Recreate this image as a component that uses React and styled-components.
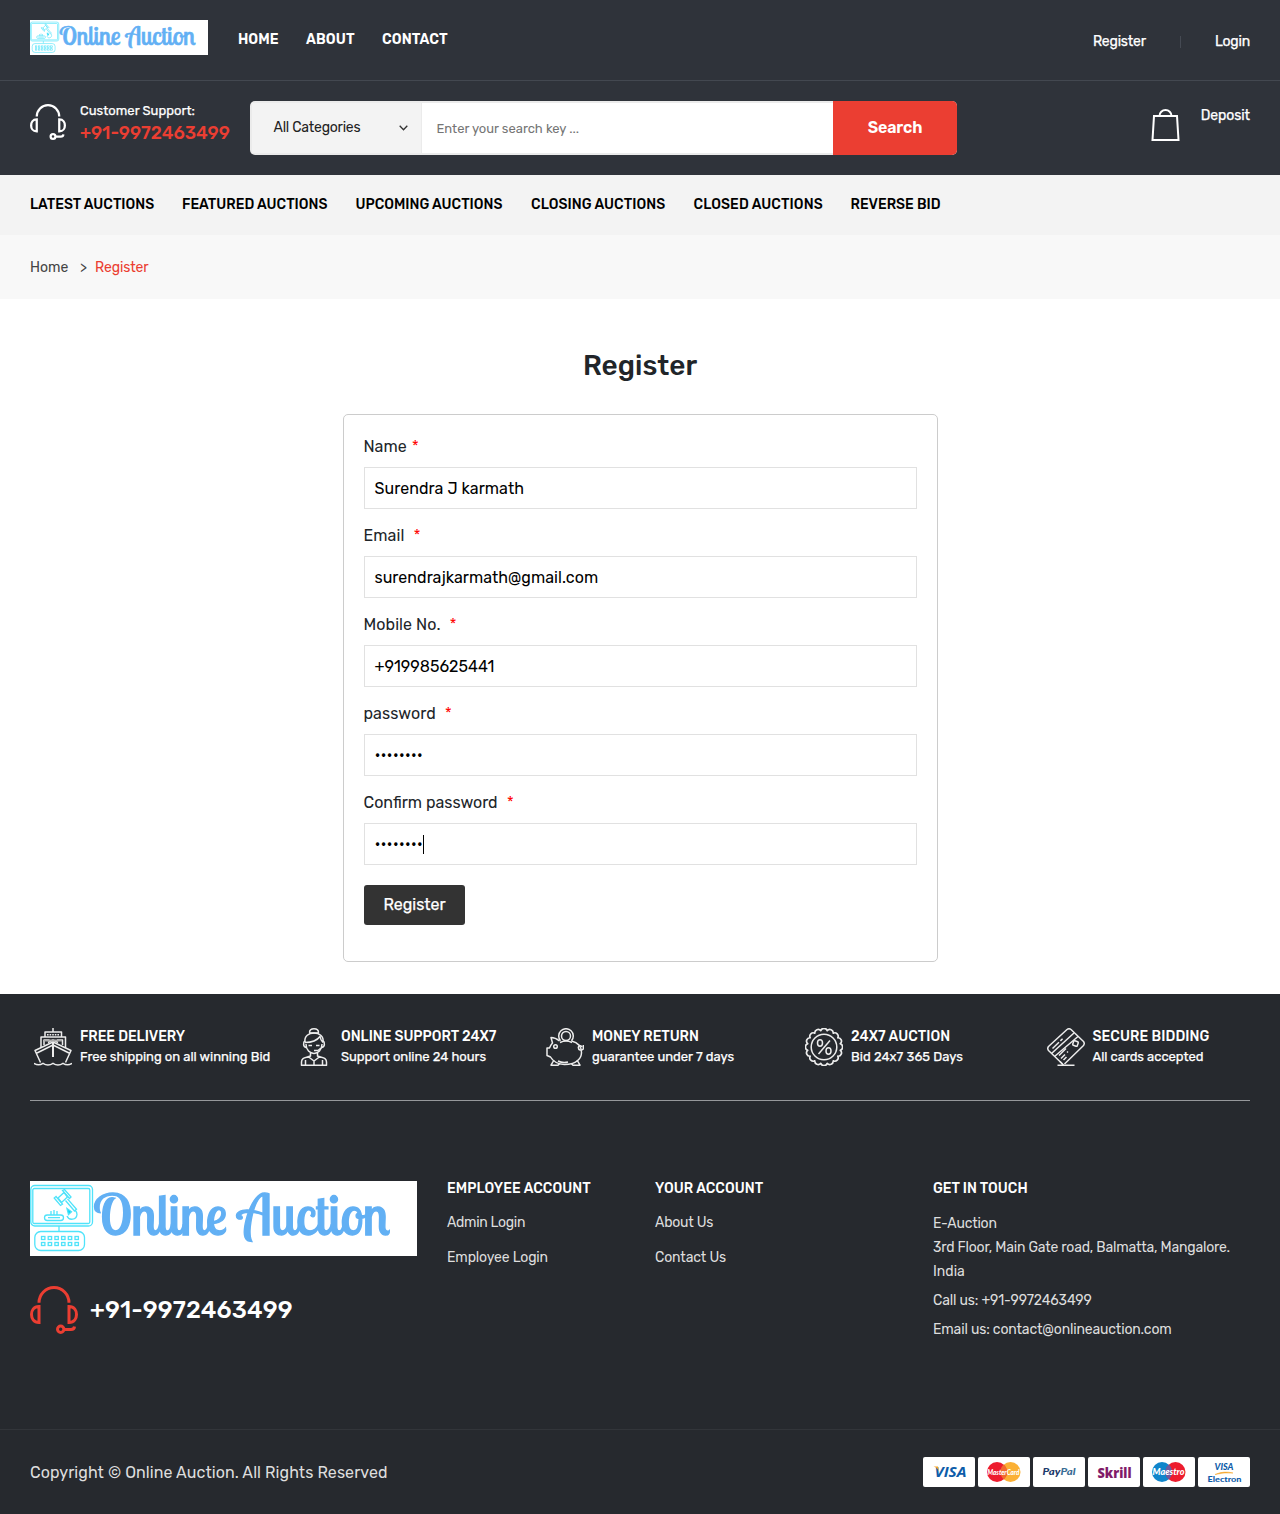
import React from "react";
import styled, { createGlobalStyle, css } from "styled-components";

const GlobalStyle = createGlobalStyle`
  * { box-sizing: border-box; }
  body {
    margin: 0;
    background: #fff;
    color: #212529;
    font-family: Rubik, Roboto, "Open Sans", sans-serif;
    font-size: 14px;
    line-height: 24px;
  }
  a { color: inherit; text-decoration: none; }
  svg { display: block; flex: none; }
`;

const type = css`
  font-size: ${(p) => p.$size || 14}px;
  font-weight: ${(p) => p.$weight || 400};
  letter-spacing: ${(p) => p.$track || 0}px;
  white-space: nowrap;
`;

const Text = styled.span`
  ${type}
  color: ${(p) => p.$color || "inherit"};
  -webkit-text-stroke: ${(p) => (p.$strong ? "0.25px currentColor" : "0")};
`;

/* ---------- header ---------- */
const TopBar = styled.header`
  display: flex;
  align-items: flex-start;
  height: 81px;
  padding: 20px 30px 0;
  background: #2f333a;
  border-bottom: 1px solid #434850;
  color: #fff;
`;
const MainMenu = styled.nav`
  display: flex;
  margin-left: 30px;
  padding-top: 8px;
`;
const MenuLink = styled.a`
  ${type}
  width: ${(p) => p.$w}px;
`;
const AccountLinks = styled.div`
  display: flex;
  align-items: center;
  margin-left: auto;
  padding-top: 10px;
`;
const Divider = styled.span`
  width: 1px;
  height: 12px;
  margin: 0 34px;
  background: #454a53;
`;
const MiddleBar = styled.div`
  display: flex;
  align-items: flex-start;
  height: 94px;
  padding: 20px 30px 0;
  background: #2f333a;
  color: #fff;
`;
const Support = styled.div`
  display: flex;
  gap: 14px;
  width: 220px;
  padding-top: 3px;
`;
const SupportText = styled.div`
  display: flex;
  flex-direction: column;
  margin-top: -4px;
  line-height: 22px;
`;
const SearchBox = styled.form`
  display: flex;
  width: 707px;
  height: 54px;
  border-radius: 5px;
  overflow: hidden;
  background: #ebebeb;
`;
const CategorySelect = styled.div`
  display: flex;
  align-items: center;
  justify-content: space-between;
  width: 169px;
  margin: 2px 1px 2px 2px;
  padding: 0 13px 0 21.5px;
  background: #f3f3f3;
  color: #222;
`;
const SearchInput = styled.div`
  display: flex;
  flex: 1;
  align-items: center;
  margin: 2px 0;
  padding: 2px 14.5px 0;
  background: #fff;
  color: #757575;
`;
const SearchButton = styled.button`
  ${type}
  width: 124px;
  border: 0;
  padding: 0 0 2px;
  background: #eb3e32;
  color: #fff;
  font-family: inherit;
`;
const Deposit = styled.div`
  display: flex;
  align-items: flex-start;
  gap: 21px;
  margin-left: auto;
  padding-top: 3px;
  svg { margin-top: 5px; }
`;
const AuctionNav = styled.nav`
  display: flex;
  align-items: center;
  height: 60px;
  padding: 0 30px;
  background: #f3f3f3;
  color: #000;
`;
const Breadcrumb = styled.div`
  display: flex;
  align-items: center;
  height: 64px;
  padding: 2px 30px 0;
  background: #f8f8f8;
  color: #444;
`;
const Crumb = styled.span`
  ${type}
  width: ${(p) => p.$w}px;
  color: ${(p) => (p.$active ? "#eb3e32" : "inherit")};
`;

/* ---------- form ---------- */
const Main = styled.main`
  display: flex;
  flex-direction: column;
  align-items: center;
  height: 695px;
  padding-top: 50px;
`;
const Title = styled.h1`
  ${type}
  margin: 0 0 31px;
  line-height: 34px;
`;
const FormCard = styled.form`
  width: 595px;
  height: 548px;
  padding: 20px;
  border: 1px solid #ccc;
  border-radius: 5px;
`;
const FieldGroup = styled.div`
  display: flex;
  flex-direction: column;
  gap: 8px;
  margin-bottom: 15px;
`;
const Label = styled.label`
  display: flex;
  height: 24px;
`;
const Required = styled.span`
  margin-left: ${(p) => p.$gap}px;
  color: red;
  font-size: 16px;
  font-weight: 300;
`;
const Field = styled.div`
  ${type}
  display: flex;
  align-items: center;
  height: 42px;
  padding: ${(p) => (p.$masked ? "0 10px" : "2px 10px 0")};
  border: 1px solid #e1e1e1;
  color: #000;
`;
const Caret = styled.span`
  width: 1px;
  height: 19px;
  background: #000;
`;
const SubmitButton = styled.button`
  ${type}
  display: block;
  width: 101px;
  height: 40px;
  margin-top: 20px;
  padding: 0 0 1px 1px;
  border: 0;
  border-radius: 3px;
  background: #333;
  color: #fff;
  font-family: inherit;
  -webkit-text-stroke: 0.25px #fff;
`;

/* ---------- footer ---------- */
const Footer = styled.footer`
  height: 520px;
  background: #26292e;
  color: #fff;
`;
const Features = styled.div`
  display: grid;
  grid-template-columns: 261px 251px 259px 241.5px 1fr;
  height: 107px;
  margin: 0 30px;
  padding: 33px 0 0 4px;
  border-bottom: 1px solid #96989b;
`;
const Feature = styled.div`
  display: flex;
  gap: 8px;
  svg { margin-top: 1px; }
`;
const FeatureText = styled.div`
  display: flex;
  flex-direction: column;
  line-height: 20px;
`;
const FooterColumns = styled.div`
  display: grid;
  grid-template-columns: 417px 208px 278px 1fr;
  height: 328px;
  padding: 80px 0 0 30px;
`;
const HelpLine = styled.div`
  display: flex;
  align-items: center;
  gap: 12px;
  margin-top: 30px;
`;
const LinkColumn = styled.div`
  display: flex;
  flex-direction: column;
  gap: 11px;
  margin-top: -4px;
  color: #ddd;
`;
const ColumnTitle = styled.h4`
  ${type}
  margin: 0 0 ${(p) => p.$after}px;
  line-height: 24px;
  color: #fff;
`;
const Contact = styled.div`
  display: flex;
  flex-direction: column;
  margin-top: -4px;
  color: #ddd;
`;
const ContactLine = styled.div`
  ${type}
  margin-bottom: ${(p) => p.$after || 0}px;
`;
const CopyrightBar = styled.div`
  display: flex;
  justify-content: space-between;
  align-items: center;
  height: 85px;
  padding: 0 30px;
  border-top: 1px solid #32353a;
  color: #ddd;
`;
const Copyright = styled.p`
  ${type}
  margin: 2px 0 0;
`;
const Payments = styled.div`
  display: flex;
  gap: 3px;
`;

/* ---------- artwork ---------- */
const Logo = ({ width, height }) => (
  <svg width={width} height={height} viewBox="0 0 387 75" preserveAspectRatio="none">
    <rect width="387" height="75" fill="#fff" />
    <g fill="none" stroke="#4fe3fa" strokeWidth="1.3">
      <rect x="0.8" y="4.5" width="61.7" height="40.5" rx="4" />
      <rect x="2.8" y="7.5" width="57" height="35" rx="1.5" />
      <path d="M29 45v5" />
      <rect x="4.8" y="50.5" width="49.7" height="19" rx="6" />
      {[0, 1, 2, 3, 4, 5].map((i) => (
        <g key={i}>
          <rect x={11.5 + i * 6.7} y="55.5" width="3.4" height="3" />
          <rect x={11.5 + i * 6.7} y="61.5" width="3.4" height="3" />
        </g>
      ))}
      <rect x="14.500" y="34" width="19" height="5.500" rx="2.700" />
      <path d="M18 36.700h12M21 30v4M24 29v5M27 30v4" />
      <path d="M28 17l6-5.500 3.500 4.500-6 5.500z" />
      <path d="M32.500 9.500l2-1 6.500 7.500-1.500 1.500zM26 15.500l-1.800 1.500 6.300 7.500 2-1.300z" />
      <path d="M35.500 19.500l9 10.500 2-1.700-9-10.500" />
      <path d="M37 35c2 5 9.500 4 10-1.500 0-2-.5-3-2-4.500" />
      <path d="M37 27.500l1.500 6 3-2.700z" fill="#00d4f5" />
    </g>
    <g fill="#62b0f4" stroke="#62b0f4" strokeWidth="1.300" fontFamily="'Lobster Two', Lobster, cursive" fontWeight="400">
      <text x="63.500" y="54" fontSize="54.300">Online Auction</text>
    </g>
  </svg>
);

const Headset = ({ size, color }) => (
  <svg width={size} height={size} viewBox="0 0 48 48" fill="none" stroke={color} strokeWidth="3">
    <path d="M9 16.800a15 15.300 0 0 1 30 0" />
    <path d="M9 20.500C3.500 20.500 1.500 25 1.500 28.500s2 8 7.500 8z" />
    <path d="M39 20.500c5.500 0 7.500 4.500 7.500 8s-2 8-7.500 8z" />
    <circle cx="30.700" cy="43.300" r="3.200" />
    <path d="M34 43.500h7c2 0 3.300-1 3.500-3" />
  </svg>
);

const Bag = () => (
  <svg width="29" height="33" viewBox="0 0 29 33" fill="none" stroke="#fff" strokeWidth="2">
    <path d="M3 7h23l1.500 24h-26z" />
    <path d="M8.500 7a6 6 0 0 1 12 0" />
  </svg>
);

const Chevron = () => (
  <svg width="9" height="6" viewBox="0 0 9 6" fill="none" stroke="#333" strokeWidth="1.300">
    <path d="M0.700 0.700l3.800 4 3.800-4" />
  </svg>
);

const icon = { width: 38, height: 38, viewBox: "0 0 38 38", fill: "none", stroke: "#ececec", strokeWidth: 1.5, strokeLinejoin: "round" };

const Ship = () => (
  <svg {...icon}>
    <path d="M19 0v4M11 9V4h16.500v5M7 20V9h24.500v11" />
    <path d="M13 6.700h13" strokeDasharray="1.600 1" />
    <path d="M10 17v-5h5.500M23 12h5.500v5M14 14.500l5-2.500 5 2.500" />
    <path d="M10 12.500h18" strokeWidth="2" stroke="#aaa" />
    <path d="M6.500 34.500L1 22.500 19 14l18 8.500-5.500 12M2 25.500l17-8.500 17 8.500" />
    <path d="M19 14v15" strokeWidth="2" />
    <path d="M0 35.300c3 2 6 2 9 0 3 2 7 2 10 0 3 2 7 2 10 0 3 2 6 2 9 0" />
  </svg>
);

const Agent = () => (
  <svg {...icon}>
    <path d="M14.500 4.500c0-5 9-5 9 0M14 5h10" />
    <path d="M10 14C8 2 30 2 28 14M10 14.500c6 0 12-2 15-6 .5 3 1.500 4.500 3 6" />
    <path d="M10 13c-2 1-2 6 1 6.500M28 13c2 1 2 6-1 6.500M11 16c0 12.500 16 12.500 16 0" />
    <path d="M13.500 17.500h3.500M21 17.500h3.500M19 22.500h4l3-2.500" />
    <path d="M15.500 25v3c-4 2-9 1-9 6v3.300h25V34c0-5-5-4-9-6v-3M13 28.500l6 4.500 6-4.500M19 33v4M10.500 32v5M27.500 32v5" />
  </svg>
);

const Piggy = () => (
  <svg {...icon}>
    <path d="M14.500 12.800a7.300 7.300 0 1 1 11 0" />
    <circle cx="20" cy="8" r="4.500" />
    <path d="M13.500 13C10.500 10.500 7.500 9.500 5 9.500l1.500 5.500c-2 2-2.500 4-3 5H1v7.500l3.500 1.500c2 3.500 6 7 14 7.500 12 0 17-6 17-12 0-6-4-10-10-11.500" />
    <path d="M14 14.500c4-2 8-2 12 0" />
    <circle cx="9.500" cy="18.500" r="1.800" />
    <path d="M37.300 17v4c-2 2-5 1-5-1.500 0-2 3-2.500 3.500-.5M8 32l-3 5.200h7l2-2M31 32l3 5.200h-7l-2-2M12 33c3 1.500 7 1.800 10 1" />
  </svg>
);

const scallops = () => {
  const n = 16;
  const pt = (i) => {
    const a = (i * 2 * Math.PI) / n - Math.PI / 2 + Math.PI / n;
    return `${(19 + 16.6 * Math.cos(a)).toFixed(2)} ${(19 + 16.6 * Math.sin(a)).toFixed(2)}`;
  };
  return `M${pt(0)}` + Array.from({ length: n }, (_, i) => `A3.4 3.4 0 0 1 ${pt(i + 1)}`).join("") + "z";
};

const PercentBadge = () => (
  <svg {...icon}>
    <path d={scallops()} strokeWidth="1.700" />
    <circle cx="19" cy="19" r="12.800" />
    <path d="M25 12.500L13.500 26" />
    <ellipse cx="15" cy="15" rx="2.500" ry="3.200" />
    <ellipse cx="23.500" cy="23" rx="2.500" ry="3.200" />
  </svg>
);

const Card = () => (
  <svg {...icon}>
    <path d="M15.500 36L1.500 22.500q-1.500-2 0-4L20 1.500q2-1.500 4 0L36.500 13.500q1.500 2 0 4L17.500 36" />
    <path d="M4.500 25.500L27 5M7.500 28.500L31 8.500" />
    <path d="M5.500 20.500L20 6.500" strokeDasharray="9 2 3 20" />
    <rect x="-2.400" y="-2.400" width="4.800" height="4.800" rx="1" transform="translate(28.5 15.5) rotate(20)" />
    <path d="M12 27.500l7-7M14 30.500l4-4M20 24.500l1-1M16.500 32l3-3" />
    <path d="M10.500 37.200h17M13 33.500l3.500 3.500" />
  </svg>
);

const payText = { fontFamily: "Lato, sans-serif", fontWeight: 900, textAnchor: "middle", lengthAdjust: "spacingAndGlyphs" };
const Badge = ({ children }) => (
  <svg width="52" height="30" viewBox="0 0 52 30">
    <rect width="52" height="30" rx="2" fill="#fff" />
    {children}
  </svg>
);
const PaymentBadges = () => (
  <Payments>
    <Badge>
      <text {...payText} x="27.500" y="20" fontSize="14.500" fontFamily="'Open Sans', sans-serif" fontWeight="700" fontStyle="italic" fill="#0d5ca9" textLength="32">VISA</text>
      <path d="M10.500 9.500h4.500l1.300 5.500c-1-3-3-4.500-5.800-5.500z" fill="#f6a427" />
    </Badge>
    <Badge>
      <circle cx="32.500" cy="15" r="10" fill="#fbb034" />
      <circle cx="19" cy="15" r="10" fill="#ed1c2e" />
      <path d="M25.750 7.600a10 10 0 0 1 0 14.800 10 10 0 0 1 0-14.800z" fill="#f26a2e" />
      <text {...payText} x="25.500" y="17.500" fontSize="7" fontStyle="italic" fill="#fff" textLength="32">MasterCard</text>
    </Badge>
    <Badge>
      <text {...payText} x="26" y="18.300" fontSize="10" fontStyle="italic" fill="#1c3a6b" textLength="33">Pay<tspan fill="#3b6d95">Pal</tspan></text>
    </Badge>
    <Badge>
      <text {...payText} x="26.500" y="20.500" fontSize="14" fontFamily="'Open Sans', sans-serif" fontWeight="800" fill="#811a68" textLength="34">Skrill</text>
    </Badge>
    <Badge>
      <circle cx="19" cy="15" r="10" fill="#0f85cb" />
      <circle cx="32.500" cy="15" r="10" fill="#ed1c2e" />
      <path d="M25.750 7.600a10 10 0 0 1 0 14.800 10 10 0 0 1 0-14.800z" fill="#6b5aa0" />
      <text {...payText} x="25.500" y="18" fontSize="9" fontStyle="italic" fill="#fff" textLength="32">Maestro</text>
    </Badge>
    <Badge>
      <text {...payText} x="26" y="13" fontSize="9" fontStyle="italic" fill="#0d5ca9" textLength="19">VISA</text>
      <path d="M17 17.500q9-4 18-1.500-9-.8-18 1.500z" fill="#f6a427" stroke="#f6a427" strokeWidth="0.500" />
      <text {...payText} x="26.500" y="25" fontSize="8" fill="#0d5ca9" textLength="34">Electron</text>
    </Badge>
  </Payments>
);

/* ---------- data ---------- */
const mainMenu = [
  ["HOME", 68, 0],
  ["ABOUT", 76, 0.12],
  ["CONTACT", 70, 0.07],
];
const auctionMenu = [
  ["LATEST AUCTIONS", 152, 0],
  ["FEATURED AUCTIONS", 173.5, 0],
  ["UPCOMING AUCTIONS", 175.5, 0],
  ["CLOSING AUCTIONS", 162.5, 0.06],
  ["CLOSED AUCTIONS", 157, 0.08],
  ["REVERSE BID", 90, 0],
];
const fields = [
  { label: "Name", track: 0, gap: 5, value: "Surendra J karmath", valueTrack: 0.06 },
  { label: "Email", track: 0.1, gap: 9, value: "surendrajkarmath@gmail.com", valueTrack: 0.04 },
  { label: "Mobile No.", track: 0.08, gap: 9, value: "+919985625441", valueTrack: 0 },
  { label: "password", track: 0.08, gap: 9, value: "••••••••", valueTrack: -0.06, masked: true },
  { label: "Confirm password", track: 0, gap: 9, value: "••••••••", valueTrack: -0.06, masked: true, focused: true },
];
const features = [
  [Ship, "FREE DELIVERY", -0.06, "Free shipping on all winning Bid", -0.02],
  [Agent, "ONLINE SUPPORT 24X7", -0.04, "Support online 24 hours", -0.02],
  [Piggy, "MONEY RETURN", -0.08, "guarantee under 7 days", 0],
  [PercentBadge, "24X7 AUCTION", 0.04, "Bid 24x7 365 Days", 0.04],
  [Card, "SECURE BIDDING", 0.08, "All cards accepted", -0.03],
];

export default function App() {
  return (
    <>
      <GlobalStyle />
      <TopBar>
        <Logo width={178} height={35} />
        <MainMenu>
          {mainMenu.map(([t, w, ls]) => (
            <MenuLink key={t} href="#" $w={w} $weight={600} $track={ls}>{t}</MenuLink>
          ))}
        </MainMenu>
        <AccountLinks>
          <Text $strong $track={-0.18}>Register</Text>
          <Divider />
          <Text $strong $track={-0.18}>Login</Text>
        </AccountLinks>
      </TopBar>
      <MiddleBar>
        <Support>
          <Headset size={36} color="#fff" />
          <SupportText>
            <Text $size={13} $strong $track={0.02}>Customer Support:</Text>
            <Text $size={18} $weight={500} $track={-0.03} $color="#eb3e32">+91-9972463499</Text>
          </SupportText>
        </Support>
        <SearchBox>
          <CategorySelect>
            <Text $track={-0.22}>All Categories</Text>
            <Chevron />
          </CategorySelect>
          <SearchInput>
            <Text $size={13} $track={-0.02}>Enter your search key ...</Text>
          </SearchInput>
          <SearchButton type="button" $size={16} $weight={600} $track={-0.15}>Search</SearchButton>
        </SearchBox>
        <Deposit>
          <Bag />
          <Text $strong $track={-0.1}>Deposit</Text>
        </Deposit>
      </MiddleBar>
      <AuctionNav>
        {auctionMenu.map(([t, w, ls]) => (
          <MenuLink key={t} href="#" $w={w} $weight={500} $track={ls}>{t}</MenuLink>
        ))}
      </AuctionNav>
      <Breadcrumb>
        <Crumb $w={50}>Home</Crumb>
        <Crumb $w={15}>&gt;</Crumb>
        <Crumb $w={60} $track={-0.13} $active>Register</Crumb>
      </Breadcrumb>
      <Main>
        <Title $size={28} $weight={500}>Register</Title>
        <FormCard>
          {fields.map((f) => (
            <FieldGroup key={f.label}>
              <Label>
                <Text $size={16} $track={f.track}>{f.label}</Text>
                <Required $gap={f.gap}>*</Required>
              </Label>
              <Field $size={16} $track={f.valueTrack} $masked={f.masked}>
                {f.value}
                {f.focused && <Caret />}
              </Field>
            </FieldGroup>
          ))}
          <SubmitButton type="button" $size={16}>Register</SubmitButton>
        </FormCard>
      </Main>
      <Footer>
        <Features>
          {features.map(([Icon, title, ls, sub, subLs]) => (
            <Feature key={title}>
              <Icon />
              <FeatureText>
                <Text $weight={500} $track={ls}>{title}</Text>
                <Text $size={13} $strong $track={subLs}>{sub}</Text>
              </FeatureText>
            </Feature>
          ))}
        </Features>
        <FooterColumns>
          <div>
            <Logo width={387} height={75} />
            <HelpLine>
              <Headset size={48} color="#eb3e32" />
              <Text $size={24} $weight={500} $track={0.18}>+91-9972463499</Text>
            </HelpLine>
          </div>
          <LinkColumn>
            <ColumnTitle $weight={500} $track={0.06} $after={-1}>EMPLOYEE ACCOUNT</ColumnTitle>
            <Text $track={-0.3}>Admin Login</Text>
            <Text $track={-0.15}>Employee Login</Text>
          </LinkColumn>
          <LinkColumn>
            <ColumnTitle $weight={500} $track={0.06} $after={-1}>YOUR ACCOUNT</ColumnTitle>
            <Text $track={-0.24}>About Us</Text>
            <Text $track={-0.14}>Contact Us</Text>
          </LinkColumn>
          <Contact>
            <ColumnTitle $weight={500} $track={0} $after={11}>GET IN TOUCH</ColumnTitle>
            <ContactLine $track={-0.2}>E-Auction</ContactLine>
            <ContactLine $track={-0.2}>3rd Floor, Main Gate road, Balmatta, Mangalore.</ContactLine>
            <ContactLine $track={0} $after={5}>India</ContactLine>
            <ContactLine $track={-0.15} $after={5}>Call us: +91-9972463499</ContactLine>
            <ContactLine $track={-0.16}>Email us: contact@onlineauction.com</ContactLine>
          </Contact>
        </FooterColumns>
        <CopyrightBar>
          <Copyright $size={16} $track={0.07}>Copyright © Online Auction. All Rights Reserved</Copyright>
          <PaymentBadges />
        </CopyrightBar>
      </Footer>
    </>
  );
}
